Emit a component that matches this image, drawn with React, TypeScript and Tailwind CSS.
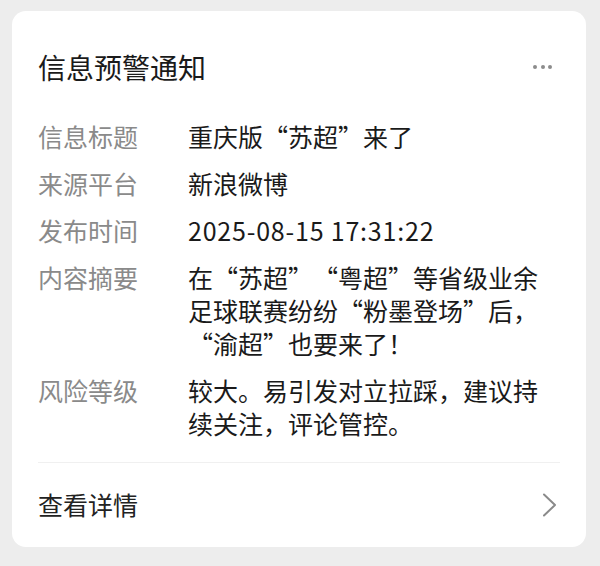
const rows = [
  { label: "信息标题", value: "重庆版“苏超”来了" },
  { label: "来源平台", value: "新浪微博" },
  { label: "发布时间", value: "2025-08-15 17:31:22", mono: true },
  {
    label: "内容摘要",
    value: "在“苏超”“粤超”等省级业余足球联赛纷纷“粉墨登场”后，“渝超”也要来了！",
  },
  { label: "风险等级", value: "较大。易引发对立拉踩，建议持续关注，评论管控。" },
];

export default function App() {
  return (
    <div
      lang="zh-CN"
      className="min-h-[566px] w-[600px] bg-[#ededed] pt-[11px] pl-[12px] pr-[14px] font-['Noto_Sans_CJK_SC','Noto_Sans',sans-serif] [text-spacing-trim:space-all]"
    >
      <div className="rounded-[14px] bg-white">
        {/* header */}
        <div className="flex items-center justify-between pl-[26px] pr-[34px] pt-[36px]">
          <div className="text-[28px] leading-[40px] text-[#1a1a1a]">信息预警通知</div>
          <div className="flex gap-[3.5px]">
            <span className="h-[4px] w-[4px] rounded-full bg-[#8c8c8c]" />
            <span className="h-[4px] w-[4px] rounded-full bg-[#8c8c8c]" />
            <span className="h-[4px] w-[4px] rounded-full bg-[#8c8c8c]" />
          </div>
        </div>

        {/* details */}
        <div className="mt-[33px] flex flex-col gap-[14px] px-[26px] text-[25px] leading-[33px]">
          {rows.map((row, index) => (
            <div className="flex" key={index}>
              <div className="w-[150px] shrink-0 text-[#8a8a8a]">{row.label}</div>
              <div className={row.mono ? "flex-1 tracking-[0.8px] text-[#1a1a1a]" : "flex-1 text-[#1a1a1a]"}>
                {row.value}
              </div>
            </div>
          ))}
        </div>

        {/* footer */}
        <div className="mx-[26px] mt-[22px] border-t border-[#f0f0f0]" />
        <div className="flex h-[84px] items-center justify-between pl-[26px] pr-[28px]">
          <div className="text-[25px] text-[#222]">查看详情</div>
          <svg width="16" height="24" viewBox="0 0 16 24" fill="none">
            <polyline points="2,1.5 13,12 2,22.5" stroke="#8a8a8a" strokeWidth="2" strokeLinecap="round" strokeLinejoin="round" />
          </svg>
        </div>
      </div>
    </div>
  );
}
